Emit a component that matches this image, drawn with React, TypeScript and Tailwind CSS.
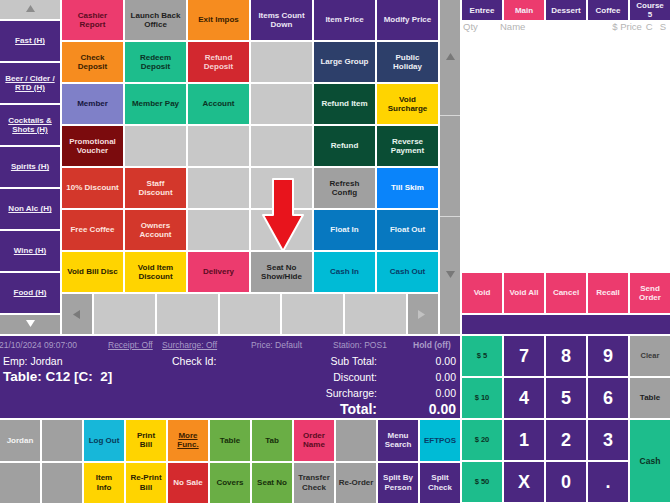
import React from 'react';

type Cell = { t: string; c: string; u?: boolean };

const PINK = 'bg-[#ec3b6e] text-[#5a0c22]';
const GRAY = 'bg-[#a0a0a0] text-[#1e1e1e]';
const EMPTY = 'bg-[#c8c8c8]';
const ORANGE = 'bg-[#f68c1f] text-[#3b1e00]';
const PURPLE = 'bg-[#4b2780] text-[#ece6f5]';
const TEAL = 'bg-[#1dbd8c] text-[#0b3325]';
const RED = 'bg-[#d2282f] text-[#f8d2d4]';
const ORED = 'bg-[#d3372b] text-[#fde3df]';
const LAV = 'bg-[#7f80c8] text-[#161640]';
const NAVY = 'bg-[#2d3f6a] text-[#eef0f6]';
const DGREEN = 'bg-[#0a4d34] text-[#e6f4ee]';
const YELLOW = 'bg-[#ffd400] text-[#2a2200]';
const MAROON = 'bg-[#7b0b0d] text-[#f6dede]';
const BLUE = 'bg-[#0a84fa] text-white';
const FLOAT = 'bg-[#0778c0] text-[#eaf4fb]';
const CYAN = 'bg-[#00bbd6] text-[#083c68]';
const LIME = 'bg-[#6aae45] text-[#17300a]';
const LOGOUT = 'bg-[#17b7d9] text-[#083a5a]';
const SALE = 'bg-[#d42a2e] text-[#fbe2e2]';
const GRAYW = 'bg-[#a0a0a0] text-[#f4f4f4]';
const GRAYD = 'bg-[#a0a0a0] text-[#2a2a2a]';

const grid: Cell[] = [
  { t: 'Cashier\nReport', c: PINK },
  { t: 'Launch Back\nOffice', c: GRAY },
  { t: 'Exit Impos', c: ORANGE },
  { t: 'Items Count\nDown', c: PURPLE },
  { t: 'Item Price', c: PURPLE },
  { t: 'Modify Price', c: PURPLE },

  { t: 'Check\nDeposit', c: ORANGE },
  { t: 'Redeem\nDeposit', c: TEAL },
  { t: 'Refund\nDeposit', c: RED },
  { t: '', c: EMPTY },
  { t: 'Large Group', c: NAVY },
  { t: 'Public\nHoliday', c: NAVY },

  { t: 'Member', c: LAV },
  { t: 'Member Pay', c: TEAL },
  { t: 'Account', c: TEAL },
  { t: '', c: EMPTY },
  { t: 'Refund Item', c: DGREEN },
  { t: 'Void\nSurcharge', c: YELLOW },

  { t: 'Promotional\nVoucher', c: MAROON },
  { t: '', c: EMPTY },
  { t: '', c: EMPTY },
  { t: '', c: EMPTY },
  { t: 'Refund', c: DGREEN },
  { t: 'Reverse\nPayment', c: DGREEN },

  { t: '10% Discount', c: ORED },
  { t: 'Staff\nDiscount', c: ORED },
  { t: '', c: EMPTY },
  { t: '', c: EMPTY },
  { t: 'Refresh\nConfig', c: GRAY },
  { t: 'Till Skim', c: BLUE },

  { t: 'Free Coffee', c: ORED },
  { t: 'Owners\nAccount', c: ORED },
  { t: '', c: EMPTY },
  { t: '', c: EMPTY },
  { t: 'Float In', c: FLOAT },
  { t: 'Float Out', c: FLOAT },

  { t: 'Void Bill Disc', c: YELLOW },
  { t: 'Void Item\nDiscount', c: YELLOW },
  { t: 'Delivery', c: PINK },
  { t: 'Seat No\nShow/Hide', c: GRAY },
  { t: 'Cash In', c: CYAN },
  { t: 'Cash Out', c: CYAN },
];

const categories = ['Fast (H)', 'Beer / Cider /\nRTD (H)', 'Cocktails &\nShots (H)', 'Spirits (H)', 'Non Alc (H)', 'Wine (H)', 'Food (H)'];

const bottom: Cell[] = [
  { t: 'Jordan', c: GRAYW },
  { t: '', c: GRAY },
  { t: 'Log Out', c: LOGOUT },
  { t: 'Print\nBill', c: YELLOW },
  { t: 'More\nFunc.', c: ORANGE, u: true },
  { t: 'Table', c: LIME },
  { t: 'Tab', c: LIME },
  { t: 'Order\nName', c: PINK },
  { t: '', c: GRAY },
  { t: 'Menu\nSearch', c: PURPLE },
  { t: 'EFTPOS', c: CYAN },

  { t: '', c: GRAY },
  { t: '', c: GRAY },
  { t: 'Item\nInfo', c: YELLOW },
  { t: 'Re-Print\nBill', c: YELLOW },
  { t: 'No Sale', c: SALE },
  { t: 'Covers', c: LIME },
  { t: 'Seat No', c: LIME },
  { t: 'Transfer\nCheck', c: GRAYD },
  { t: 'Re-Order', c: GRAYD },
  { t: 'Split By\nPerson', c: PURPLE },
  { t: 'Split\nCheck', c: PURPLE },
];

const Btn = ({ t, c, u }: Cell) => (
  <div className={`flex items-center justify-center overflow-hidden px-[1px] text-center whitespace-pre-line text-[8px] font-bold leading-[9.5px] ${c} ${u ? 'underline' : ''}`}>
    {t}
  </div>
);

// small triangle arrows for the scroll buttons
const Tri = ({ dir, color }: { dir: 'up' | 'down' | 'left' | 'right'; color: string }) => {
  const pts = {
    up: '0,7 4.5,0 9,7',
    down: '0,0 9,0 4.5,7',
    left: '7,0 7,9 0,4.5',
    right: '0,0 0,9 7,4.5',
  }[dir];
  return (
    <svg width="9" height="9" viewBox="0 0 9 9">
      <polygon points={pts} fill={color} />
    </svg>
  );
};

export default function App() {
  return (
    <div className="flex h-[503px] w-[670px] flex-col gap-[2px] overflow-hidden bg-white font-['Liberation_Sans',Arial,sans-serif]">
      {/* top section */}
      <div className="relative flex h-[334px]">
        {/* categories */}
        <div className="flex w-[60px] flex-col gap-[2px]">
          <div className="flex h-[19px] items-center justify-center bg-[#c6c6c6]">
            <Tri dir="up" color="#8c8c8c" />
          </div>
          {categories.map((c) => (
            <div key={c} className="flex h-[40px] items-center justify-center whitespace-pre-line bg-[#4b2780] text-center text-[8px] font-bold leading-[9.5px] text-[#f2eef8] underline">
              {c}
            </div>
          ))}
          <div className="flex flex-1 items-center justify-center bg-[#a0a0a0]">
            <Tri dir="down" color="#ffffff" />
          </div>
        </div>

        {/* main button grid */}
        <div className="ml-[2px] grid w-[376px] grid-cols-6 grid-rows-8 gap-[2px]">
          {grid.map((g, i) => (
            <Btn key={i} {...g} />
          ))}
          <div className="col-span-6 flex gap-[2px]">
            <div className="flex w-[30px] items-center justify-center bg-[#a3a3a3]">
              <Tri dir="left" color="#7a7a7a" />
            </div>
            <div className="flex-1 bg-[#c8c8c8]" />
            <div className="flex-1 bg-[#c8c8c8]" />
            <div className="flex-1 bg-[#c8c8c8]" />
            <div className="flex-1 bg-[#c8c8c8]" />
            <div className="flex-1 bg-[#c8c8c8]" />
            <div className="flex w-[30px] items-center justify-center bg-[#a3a3a3]">
              <Tri dir="right" color="#c2c2c2" />
            </div>
          </div>
        </div>

        {/* scroll column */}
        <div className="ml-[2px] flex w-[20px] flex-col gap-[1px] bg-[#d8d8d8]">
          <div className="flex h-[115px] items-center justify-center bg-[#a3a3a3]">
            <Tri dir="up" color="#787878" />
          </div>
          <div className="flex-1 bg-[#a3a3a3]" />
          <div className="flex h-[117px] items-center justify-center bg-[#a3a3a3]">
            <Tri dir="down" color="#787878" />
          </div>
        </div>

        {/* order panel */}
        <div className="ml-[1px] flex w-[209px] flex-col">
          <div className="grid h-[20px] grid-cols-5 gap-[2px] pl-[1px]">
            {['Entree', 'Main', 'Dessert', 'Coffee', 'Course\n5'].map((t) => (
              <div
                key={t}
                className={`flex items-center justify-center overflow-hidden whitespace-pre-line text-center text-[8px] font-bold leading-[9px] text-[#f2eef8] ${t === 'Main' ? 'bg-[#ec3b6e]' : 'bg-[#4b2780]'}`}
              >
                {t}
              </div>
            ))}
          </div>
          <div className="flex flex-1 flex-col">
            <div className="flex h-[15px] items-center text-[9.5px] text-[#b4b4b4]">
              <span className="ml-[2px] w-[37px]">Qty</span>
              <span className="flex-1">Name</span>
              <span>$ Price</span>
              <span className="ml-[4px]">C</span>
              <span className="ml-[7px] mr-[4px]">S</span>
            </div>
          </div>
          <div className="mt-[2px] grid h-[40px] grid-cols-5 gap-[2px] pl-[1px]">
            {['Void', 'Void All', 'Cancel', 'Recall', 'Send\nOrder'].map((t) => (
              <div key={t} className="flex items-center justify-center whitespace-pre-line bg-[#ec3b6e] text-center text-[8px] font-bold leading-[9.5px] text-[#fde8ee]">
                {t}
              </div>
            ))}
          </div>
          <div className="mt-[2px] ml-[1px] h-[19px] bg-[#4b2780]" />
        </div>

        {/* red arrow pointer */}
        <svg className="absolute left-[261px] top-[177px]" width="44" height="76" viewBox="0 0 44 76">
          <path d="M12 2 H32 V38 H42 L22 74 L2 38 H12 Z" fill="#e8141c" stroke="#ffffff" strokeWidth="2" strokeLinejoin="round" />
        </svg>
      </div>

      {/* bottom section */}
      <div className="flex flex-1 gap-[2px]">
        <div className="flex w-[460px] flex-col gap-[2px]">
          {/* check info */}
          <div className="flex h-[82px] flex-col bg-[#4a2680] text-white">
            <div className="flex h-[17px] items-center pt-[1px] text-[8.5px] text-[#a99bc7]">
              <span className="-ml-[1px] w-[109px] whitespace-nowrap">21/10/2024 09:07:00</span>
              <span className="w-[54px] underline">Receipt: Off</span>
              <span className="w-[89px] underline">Surcharge: Off</span>
              <span className="w-[82px]">Price: Default</span>
              <span className="w-[80px]">Station: POS1</span>
              <span className="font-bold">Hold (off)</span>
            </div>
            <div className="flex">
              <div className="w-[172px] pl-[3px]">
                <div className="h-[16px] text-[10.5px] leading-[16px]">Emp: Jordan</div>
                <div className="h-[16px] whitespace-pre text-[13.5px] font-bold leading-[16px]">Table: C12 [C:  2]</div>
              </div>
              <div className="w-[100px] text-[10.5px] leading-[16px]">Check Id:</div>
              <div className="w-[105px] text-right text-[10.5px] leading-[16px]">
                <div>Sub Total:</div>
                <div>Discount:</div>
                <div>Surcharge:</div>
                <div className="text-[14px] font-bold">Total:</div>
              </div>
              <div className="flex-1 pr-[4px] text-right text-[10.5px] leading-[16px]">
                <div>0.00</div>
                <div>0.00</div>
                <div>0.00</div>
                <div className="text-[14px] font-bold">0.00</div>
              </div>
            </div>
          </div>
          {/* function buttons */}
          <div className="grid flex-1 grid-cols-11 grid-rows-2 gap-[2px]">
            {bottom.map((b, i) => (
              <Btn key={i} {...b} />
            ))}
          </div>
        </div>

        {/* numpad */}
        <div className="grid h-[166px] flex-1 grid-cols-5 grid-rows-4 gap-[2px]">
          <div className="flex items-center justify-center bg-[#1dbd8c] text-[7.5px] font-bold text-[#0b3325]">$ 5</div>
          {['7', '8', '9'].map((n) => (
            <div key={n} className="flex items-center justify-center bg-[#4b2780] text-[18px] font-bold text-white">{n}</div>
          ))}
          <div className="flex items-center justify-center bg-[#a0a0a0] text-[7.5px] font-bold text-[#3a3a3a]">Clear</div>

          <div className="flex items-center justify-center bg-[#1dbd8c] text-[7.5px] font-bold text-[#0b3325]">$ 10</div>
          {['4', '5', '6'].map((n) => (
            <div key={n} className="flex items-center justify-center bg-[#4b2780] text-[18px] font-bold text-white">{n}</div>
          ))}
          <div className="flex items-center justify-center bg-[#a0a0a0] text-[8px] font-bold text-[#1e1e1e]">Table</div>

          <div className="flex items-center justify-center bg-[#1dbd8c] text-[7.5px] font-bold text-[#0b3325]">$ 20</div>
          {['1', '2', '3'].map((n) => (
            <div key={n} className="flex items-center justify-center bg-[#4b2780] text-[18px] font-bold text-white">{n}</div>
          ))}
          <div className="row-span-2 flex items-center justify-center bg-[#1dbd8c] text-[8.5px] font-bold text-[#0b3325]">Cash</div>

          <div className="flex items-center justify-center bg-[#1dbd8c] text-[7.5px] font-bold text-[#0b3325]">$ 50</div>
          {['X', '0', '.'].map((n) => (
            <div key={n} className="flex items-center justify-center bg-[#4b2780] text-[18px] font-bold text-white">{n}</div>
          ))}
        </div>
      </div>
    </div>
  );
}
